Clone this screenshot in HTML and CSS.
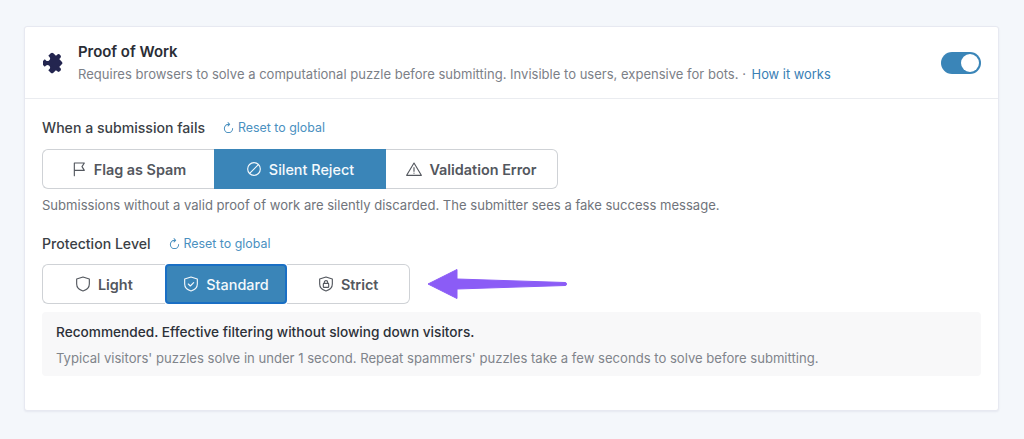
FILE: index.html
```html
<!DOCTYPE html>
<html lang="en">
<head>
<meta charset="utf-8">
<title>Proof of Work</title>
<link rel="stylesheet" href="styles.css">
</head>
<body>
<main class="card">
  <header class="head">
    <svg class="puzzle" viewBox="0 0 24 24" aria-hidden="true"><path d="M20.500 11H19V7a2 2 0 0 0-2-2h-4V3.500a2.500 2.500 0 0 0-5 0V5H4a2 2 0 0 0-2 2v3.800h1.500a2.700 2.700 0 0 1 0 5.400H2V20a2 2 0 0 0 2 2h3.800v-1.500a2.700 2.700 0 0 1 5.400 0V22H17a2 2 0 0 0 2-2v-4h1.500a2.500 2.500 0 0 0 0-5z" transform="rotate(45 12 12)"/></svg>
    <div class="head-text">
      <h1>Proof of Work</h1>
      <p>Requires browsers to solve a computational puzzle before submitting. Invisible to users, expensive for bots. · <a href="#">How it works</a></p>
    </div>
    <span class="toggle"><span class="knob"></span></span>
  </header>
  <section class="body">
    <div class="label-row">
      <span class="label">When a submission fails</span>
      <a class="reset" href="#"><svg viewBox="0 0 24 24"><path d="M11 1.500l3.500 3.500-3.500 3.500M14 5H12a9 9 0 1 0 9 9"/></svg>Reset to global</a>
    </div>
    <div class="seg seg-wide">
      <button class="opt"><svg viewBox="0 0 24 24"><path d="M5 22V3h15l-3.500 5.500L20 14H5"/></svg>Flag as Spam</button>
      <button class="opt on"><svg viewBox="0 0 24 24"><circle cx="12" cy="12" r="9.500"/><path d="M5.500 18.500L18.500 5.500"/></svg>Silent Reject</button>
      <button class="opt"><svg viewBox="0 0 24 24"><path d="M12 3L23 21.500H1z"/><path d="M12 10v5.500M12 18v.3"/></svg>Validation Error</button>
    </div>
    <p class="hint">Submissions without a valid proof of work are silently discarded. The submitter sees a fake success message.</p>
    <div class="label-row second">
      <span class="label">Protection Level</span>
      <a class="reset" href="#"><svg viewBox="0 0 24 24"><path d="M11 1.500l3.500 3.500-3.500 3.500M14 5H12a9 9 0 1 0 9 9"/></svg>Reset to global</a>
    </div>
    <div class="level-row">
      <div class="seg seg-narrow">
        <button class="opt"><svg viewBox="0 0 24 24"><path d="M12 1.500l9.500 3V12c0 5.500-4 8.800-9.500 10.500C6.500 20.800 2.500 17.500 2.500 12V4.500z"/></svg>Light</button>
        <button class="opt on focus"><svg viewBox="0 0 24 24"><path d="M12 1.500l9.500 3V12c0 5.500-4 8.800-9.500 10.500C6.500 20.800 2.500 17.500 2.500 12V4.500z"/><path d="M8 12l3 3 5-5"/></svg>Standard</button>
        <button class="opt"><svg viewBox="0 0 24 24"><path d="M12 1.500l9.500 3V12c0 5.500-4 8.800-9.500 10.500C6.500 20.800 2.500 17.500 2.500 12V4.500z"/><rect x="8" y="11" width="8" height="6" rx="1"/><path d="M9.500 11V9.500a2.500 2.500 0 0 1 5 0V11"/></svg>Strict</button>
      </div>
      <svg class="arrow" viewBox="0 0 142 32" aria-hidden="true"><path d="M2 16L31 1.500V11L139 14.500a1.500 1.500 0 0 1 0 3L31 21v9.500z"/></svg>
    </div>
    <div class="note">
      <strong>Recommended. Effective filtering without slowing down visitors.</strong>
      <span>Typical visitors' puzzles solve in under 1 second. Repeat spammers' puzzles take a few seconds to solve before submitting.</span>
    </div>
  </section>
</main>
</body>
</html>
```
FILE: styles.css
```css
* { box-sizing: border-box; }
html, body { height: 100%; }
body {
  margin: 0;
  padding: 26px 25px 28px 24px;
  background: #f4f7fb;
  font-family: Inter, "Liberation Sans", sans-serif;
  color: #2c3038;
  overflow: hidden;
}
.card {
  width: 975px;
  height: 385px;
  background: #fff;
  border: 1px solid #e7e9f1;
  border-radius: 3px;
  box-shadow: 0 1px 2px rgba(60, 60, 120, .08);
}
.head {
  display: flex;
  align-items: center;
  height: 72px;
  padding: 0 17px;
  border-bottom: 1px solid #eaecf0;
}
.puzzle { width: 22px; height: 22px; fill: #23254f; flex: none; margin: 0 13px 0 1px; }
.head-text { flex: 1; padding-top: 1px; }
.head h1 { margin: 0 0 4px; font-size: 14.9px; line-height: 18px; font-weight: 600; color: #2a2d35; }
.head p { margin: 0; font-size: 13.04px; line-height: 18px; color: #7c8087; }
.head a { margin-left: 2px; font-size: 12.9px; color: #3a80b5; text-decoration: none; }
.toggle {
  width: 40px; height: 22px; border-radius: 11px; background: #3a85b8;
  display: flex; justify-content: flex-end; align-items: center; padding: 2px; flex: none;
}
.knob { width: 18px; height: 18px; border-radius: 50%; background: #fff; }
.body { padding: 19px 17px 0; }
.label-row { display: flex; align-items: center; gap: 18px; height: 18px; }
.label-row.second { margin-top: 21px; }
.label { font-size: 14.1px; font-weight: 500; color: #3b3f46; }
.reset { display: flex; align-items: center; gap: 4px; font-size: 12.4px; color: #4a90bf; text-decoration: none; }
.reset svg { width: 11px; height: 11px; fill: none; stroke: currentColor; stroke-width: 2.200; stroke-linecap: round; stroke-linejoin: round; }
.seg {
  display: grid;
  grid-auto-flow: column;
  grid-auto-columns: 1fr;
  height: 40px;
  margin-top: 13px;
  border-radius: 6px;
  flex: none;
}
.seg-wide { width: 516px; }
.seg-narrow { width: 368px; margin-top: 0; }
.opt {
  display: flex; align-items: center; justify-content: center; gap: 7px;
  font: 600 14.4px Inter, "Liberation Sans", sans-serif;
  color: #53575e;
  background: #fff;
  border: 1px solid #cfd2d6;
  border-left-width: 0;
  border-right-width: 0;
  padding: 0;
}
.opt:first-child { border-left-width: 1px; border-radius: 6px 0 0 6px; }
.opt:last-child { border-right-width: 1px; border-radius: 0 6px 6px 0; }
.opt svg { width: 16px; height: 16px; fill: none; stroke: currentColor; stroke-width: 1.700; stroke-linecap: round; stroke-linejoin: round; }
.opt.on { background: #3a85b8; border-color: #3a85b8; color: #f4f9fc; font-weight: 500; }
.opt.focus { border: 2px solid #1a6fc4; border-radius: 4px; }
.hint { margin: 8px 0 0; font-size: 13.06px; line-height: 16px; color: #70747b; }
.level-row { display: flex; align-items: center; gap: 16px; margin-top: 12px; }
.arrow { width: 142px; height: 32px; fill: #8b5cf6; flex: none; stroke: #8b5cf6; stroke-width: 1; stroke-linejoin: round; }
.note {
  display: flex; flex-direction: column; gap: 9px;
  height: 64px;
  margin-top: 8px;
  padding: 12px 14px 0;
  background: #f8f8f9;
  border-radius: 4px;
}
.note strong { font-size: 13.66px; line-height: 17px; font-weight: 500; color: #2c3038; }
.note span { font-size: 13.08px; line-height: 16px; color: #80848b; }
```
